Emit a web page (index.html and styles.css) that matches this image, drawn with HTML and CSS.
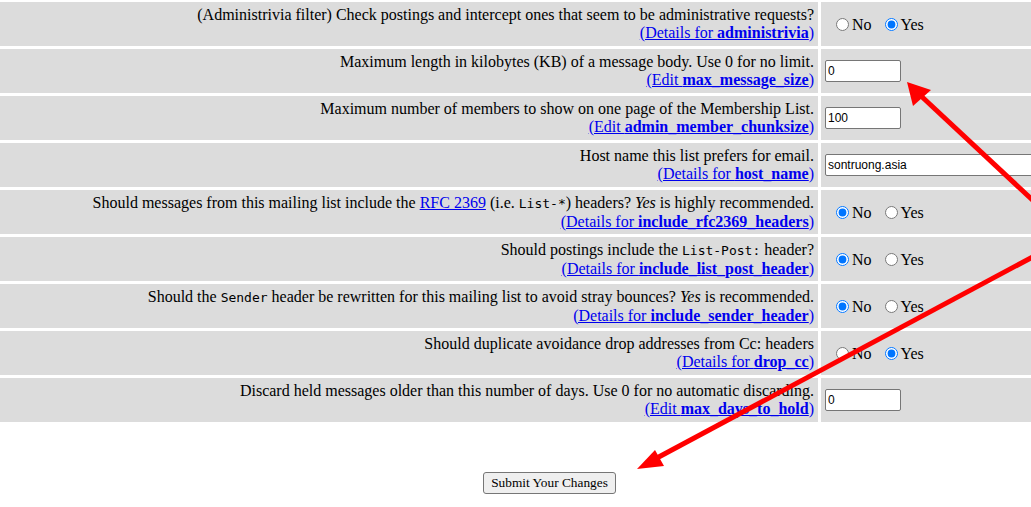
FILE: index.html
```html
<!DOCTYPE html>
<html>
<head>
<meta charset="utf-8">
<title>Mailman options</title>
<link rel="stylesheet" href="styles.css">
</head>
<body>
<div class="page">
  <div class="options">
    <div class="desc">(Administrivia filter) Check postings and intercept ones that seem to be administrative requests?<br><a href="#">(Details for <strong>administrivia</strong>)</a></div>
    <div class="ctrl"><div class="radios"><label class="opt"><input type="radio" name="administrivia">No</label><label class="opt"><input type="radio" name="administrivia" checked>Yes</label></div></div>

    <div class="desc">Maximum length in kilobytes (KB) of a message body. Use 0 for no limit.<br><a href="#">(Edit <strong>max_message_size</strong>)</a></div>
    <div class="ctrl"><input class="txt small" type="text" value="0"></div>

    <div class="desc">Maximum number of members to show on one page of the Membership List.<br><a href="#">(Edit <strong>admin_member_chunksize</strong>)</a></div>
    <div class="ctrl"><input class="txt small" type="text" value="100"></div>

    <div class="desc">Host name this list prefers for email.<br><a href="#">(Details for <strong>host_name</strong>)</a></div>
    <div class="ctrl"><input class="txt wide" type="text" value="sontruong.asia"></div>

    <div class="desc">Should messages from this mailing list include the <a href="#">RFC 2369</a> (i.e. <code>List-*</code>) headers? <em>Yes</em> is highly recommended.<br><a href="#">(Details for <strong>include_rfc2369_headers</strong>)</a></div>
    <div class="ctrl"><div class="radios"><label class="opt"><input type="radio" name="rfc" checked>No</label><label class="opt"><input type="radio" name="rfc">Yes</label></div></div>

    <div class="desc">Should postings include the <code>List-Post:</code> header?<br><a href="#">(Details for <strong>include_list_post_header</strong>)</a></div>
    <div class="ctrl"><div class="radios"><label class="opt"><input type="radio" name="lph" checked>No</label><label class="opt"><input type="radio" name="lph">Yes</label></div></div>

    <div class="desc">Should the <code>Sender</code> header be rewritten for this mailing list to avoid stray bounces? <em>Yes</em> is recommended.<br><a href="#">(Details for <strong>include_sender_header</strong>)</a></div>
    <div class="ctrl"><div class="radios"><label class="opt"><input type="radio" name="sh" checked>No</label><label class="opt"><input type="radio" name="sh">Yes</label></div></div>

    <div class="desc">Should duplicate avoidance drop addresses from Cc: headers<br><a href="#">(Details for <strong>drop_cc</strong>)</a></div>
    <div class="ctrl"><div class="radios"><label class="opt"><input type="radio" name="cc">No</label><label class="opt"><input type="radio" name="cc" checked>Yes</label></div></div>

    <div class="desc">Discard held messages older than this number of days. Use 0 for no automatic discarding.<br><a href="#">(Edit <strong>max_days_to_hold</strong>)</a></div>
    <div class="ctrl"><input class="txt small" type="text" value="0"></div>
  </div>

  <div class="submit-row">
    <button class="submit" type="button">Submit Your Changes</button>
  </div>

  <svg class="arrows" width="1031" height="507" viewBox="0 0 1031 507" xmlns="http://www.w3.org/2000/svg">
    <line x1="1040" y1="207" x2="920" y2="95" stroke="#ff0000" stroke-width="5"/>
    <polygon points="907,82 913,106 931,90" fill="#ff0000"/>
    <line x1="1040" y1="253" x2="655" y2="459" stroke="#ff0000" stroke-width="5"/>
    <polygon points="637,469 655,450 664,466" fill="#ff0000"/>
  </svg>
</div>
</body>
</html>
```

FILE: styles.css
```css
html, body {
  margin: 0;
  padding: 0;
  background: #ffffff;
  overflow: hidden;
}

.page {
  position: relative;
  width: 1031px;
  height: 507px;
  font-family: "Liberation Serif", "Times New Roman", serif;
  font-size: 16px;
  line-height: 17.5px;
  color: #000000;
}

.options {
  display: grid;
  grid-template-columns: 818px 1fr;
  grid-auto-rows: 44px;
  gap: 3px;
  padding-top: 2px;
}

.desc {
  background: #dcdcdc;
  text-align: right;
  padding: 4px 4px 4px 4px;
  white-space: nowrap;
}

.desc a {
  color: #0000ee;
  text-decoration: underline;
}

.desc code {
  font-family: "DejaVu Sans Mono", "Liberation Mono", monospace;
  font-size: 13px;
}

.ctrl {
  background: #dcdcdc;
  display: flex;
  align-items: center;
  padding: 0 0 0 4px;
  overflow: hidden;
  min-width: 0;
}

.radios {
  display: flex;
  align-items: center;
  padding-left: 11px;
  gap: 13px;
  padding-top: 1px;
  line-height: 18px;
}

.opt {
  display: flex;
  align-items: center;
}

.opt input {
  width: 13px;
  height: 13px;
  margin: 0 3px 0 0;
}

.txt {
  box-sizing: border-box;
  height: 22px;
  border: 1px solid #767676;
  border-radius: 2px;
  padding: 1px 2px;
  font-family: "Liberation Sans", Arial, sans-serif;
  font-size: 12px;
  background: #ffffff;
  color: #000000;
  flex: none;
}

.small {
  width: 76px;
}

.wide {
  width: 400px;
}

.submit-row {
  padding: 50px 0 0 483px;
}

.submit {
  box-sizing: border-box;
  width: 133px;
  height: 22px;
  padding: 0 6px;
  border: 1px solid #767676;
  border-radius: 3px;
  background: #efefef;
  font-family: "Liberation Serif", "Times New Roman", serif;
  font-size: 13.33px;
  color: #000000;
}

.arrows {
  position: absolute;
  top: 0;
  left: 0;
  pointer-events: none;
}
```
